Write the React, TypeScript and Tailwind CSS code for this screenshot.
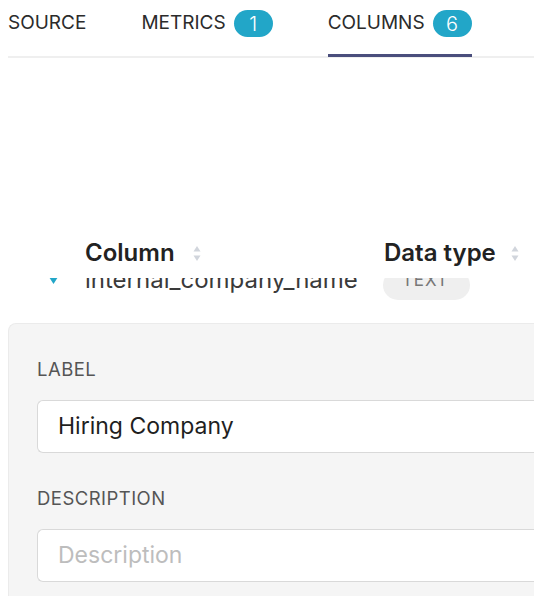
function SortIcon() {
  return (
    <svg width="8" height="17" viewBox="0 0 8 17" className="text-gray-300">
      <path d="M4 1 L7.5 6.5 H0.5 Z" fill="currentColor" />
      <path d="M4 16 L7.5 10.5 H0.5 Z" fill="currentColor" />
    </svg>
  );
}

function Badge({ n }: { n: number }) {
  return (
    <span className="ml-2 inline-flex h-[27px] w-[39px] items-center justify-center rounded-full bg-[#22a6c8] text-[20px] font-light text-white">
      {n}
    </span>
  );
}

export default function App() {
  return (
    <div className="h-[596px] w-[534px] overflow-hidden bg-white font-['Inter',sans-serif]">
      {/* Tabs */}
      <div className="ml-2 flex h-[58px] items-start gap-[55px] border-b-2 border-[#efefef] pt-[10px]">
        <div className="flex h-[27px] items-center text-[19px] text-[#2b2b2b]">SOURCE</div>
        <div className="flex h-[27px] items-center text-[19px] text-[#2b2b2b]">
          METRICS
          <Badge n={1} />
        </div>
        <div className="relative flex h-[27px] items-center text-[19px] text-[#2b2b2b]">
          COLUMNS
          <Badge n={6} />
          <div className="absolute -bottom-[20px] left-0 right-0 h-[3px] bg-[#4a4e7c]" />
        </div>
      </div>

      {/* Table header */}
      <div className="mt-[176px] flex h-[44px] items-start pt-[3px]">
        <div className="ml-[85px] flex h-[32px] w-[299px] items-center gap-[18px] text-[24px] font-semibold text-[#222]">
          Column
          <SortIcon />
        </div>
        <div className="flex h-[32px] items-center gap-[15px] text-[24px] font-semibold text-[#222]">
          Data type
          <SortIcon />
        </div>
      </div>

      {/* Row, scrolled partly under the header */}
      <div className="h-[22px] overflow-hidden">
        <div className="-mt-[8px] flex h-[30px] items-center">
          <div className="ml-[49px] w-[36px] mb-[10px]">
            <svg width="9" height="7" viewBox="0 0 9 7">
              <path d="M0 0 H9 L4.5 7 Z" fill="#22a6c8" />
            </svg>
          </div>
          <div className="mb-[10px] w-[298px] text-[24px] text-[#3a3a3a]">internal_company_name</div>
          <div className="flex h-[30px] w-[87px] items-center rounded-full bg-[#efefef] pl-[19px] text-[17px] tracking-wider text-[#777]">
            <span className="mb-[8px]">TEXT</span>
          </div>
        </div>
      </div>

      {/* Edit panel */}
      <div className="ml-2 mt-[23px] h-[300px] rounded-tl-lg border border-r-0 border-[#ebebeb] bg-[#f5f5f5] pl-[28px] pt-[32px]">
        <div className="text-[18.5px] tracking-wide text-[#555]">LABEL</div>
        <div className="mt-[16px] flex h-[53px] items-center rounded-l-md border border-r-0 border-[#d9d9d9] bg-white pl-[20px] text-[23px] text-[#1f1f1f]">
          Hiring Company
        </div>
        <div className="mt-[32px] text-[18.5px] tracking-wide text-[#555]">DESCRIPTION</div>
        <div className="mt-[16px] flex h-[53px] items-center rounded-l-md border border-r-0 border-[#d9d9d9] bg-white pl-[20px] text-[23px] text-[#bdbdbd]">
          Description
        </div>
      </div>
    </div>
  );
}
